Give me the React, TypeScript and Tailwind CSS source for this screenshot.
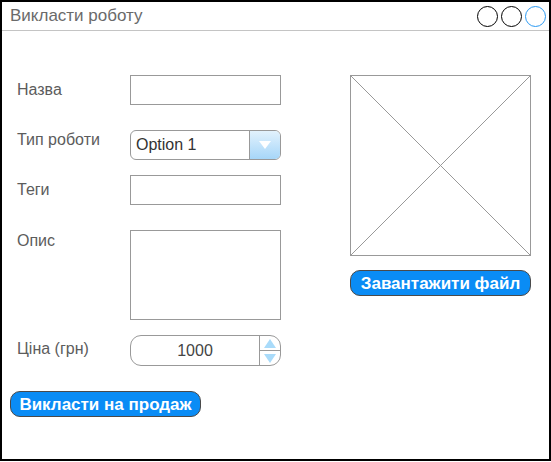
import * as React from 'react';

function TextBox({ h }: { h: string }) {
    return <div className={`w-[151px] ${h} border border-[#999] bg-white`} />;
}

function Select() {
    return (
        <div className="flex w-[151px] h-[30px] border border-[#999] rounded-[6px] overflow-hidden bg-white">
            <div className="flex-1 flex items-center pl-[5px] text-[16px] text-[#333]">Option 1</div>
            <div className="w-[31px] border-l border-[#999] bg-gradient-to-b from-[#e2f2fd] to-[#a6d6f8] flex items-center justify-center">
                <svg width="14" height="10" viewBox="0 0 14 10">
                    <path d="M1 1h12L7 9z" fill="#fff" />
                </svg>
            </div>
        </div>
    );
}

function Spinner() {
    return (
        <div className="flex w-[151px] h-[31px] border border-[#999] rounded-[11px] overflow-hidden bg-white">
            <div className="flex-1 flex items-center justify-center text-[16px] text-[#444]">1000</div>
            <div className="w-[21px] border-l border-[#999] flex flex-col">
                <div className="flex-1 flex items-center justify-center border-b border-[#999]">
                    <svg width="12" height="9" viewBox="0 0 12 9">
                        <path d="M6 0l6 9H0z" fill="#a9dbfa" />
                    </svg>
                </div>
                <div className="flex-1 flex items-center justify-center">
                    <svg width="12" height="9" viewBox="0 0 12 9">
                        <path d="M0 0h12L6 9z" fill="#a9dbfa" />
                    </svg>
                </div>
            </div>
        </div>
    );
}

function BlueButton({ label, className }: { label: string; className: string }) {
    return (
        <button
            className={`h-[26px] rounded-[10px] border border-[#4a4a4a] bg-[#0a8cf5] text-white font-bold text-[17px] leading-none flex items-center justify-center ${className}`}
        >
            {label}
        </button>
    );
}

export default function App() {
    const label = 'w-[113px] shrink-0 text-[16px] leading-[20px] text-[#5c5c5c]';
    return (
        <div
            className="w-[551px] h-[461px] border-2 border-black bg-white flex flex-col"
            style={{ fontFamily: '"Liberation Sans", Arial, sans-serif' }}
        >
            {/* title bar */}
            <div className="h-[29px] shrink-0 border-b border-[#c4c4c4] flex items-center justify-between pl-[8px] pr-[3px]">
                <span className="text-[17px] text-[#6a6a6a]">Викласти роботу</span>
                <div className="flex gap-[3px]">
                    <div className="w-[21px] h-[21px] rounded-full border-[1.5px] border-black" />
                    <div className="w-[21px] h-[21px] rounded-full border-[1.5px] border-black" />
                    <div className="w-[21px] h-[21px] rounded-full border-[1.5px] border-[#2b9af3]" />
                </div>
            </div>

            {/* body */}
            <div className="flex pt-[44px] pl-[8px]">
                <div className="w-[271px] flex flex-col">
                    <div className="flex pl-[7px]">
                        <div className={`${label} pt-[5px]`}>Назва</div>
                        <TextBox h="h-[30px]" />
                    </div>
                    <div className="flex pl-[7px] mt-[25px]">
                        <div className={`${label}`}>Тип роботи</div>
                        <Select />
                    </div>
                    <div className="flex pl-[7px] mt-[15px]">
                        <div className={`${label} pt-[5px]`}>Теги</div>
                        <TextBox h="h-[30px]" />
                    </div>
                    <div className="flex pl-[7px] mt-[25px]">
                        <div className={`${label} pt-[1px]`}>Опис</div>
                        <TextBox h="h-[90px]" />
                    </div>
                    <div className="flex pl-[7px] mt-[15px]">
                        <div className={`${label} pt-[4px]`}>Ціна (грн)</div>
                        <Spinner />
                    </div>
                    <BlueButton label="Викласти на продаж" className="w-[191px] mt-[25px]" />
                </div>

                <div className="ml-[69px] flex flex-col">
                    <svg width="181" height="181" viewBox="0 0 181 181">
                        <rect x="0.5" y="0.5" width="180" height="180" fill="#fff" stroke="#999" />
                        <line x1="0.5" y1="0.5" x2="180.5" y2="180.5" stroke="#999" />
                        <line x1="180.5" y1="0.5" x2="0.5" y2="180.5" stroke="#999" />
                    </svg>
                    <BlueButton label="Завантажити файл" className="w-[181px] mt-[14px]" />
                </div>
            </div>
        </div>
    );
}
